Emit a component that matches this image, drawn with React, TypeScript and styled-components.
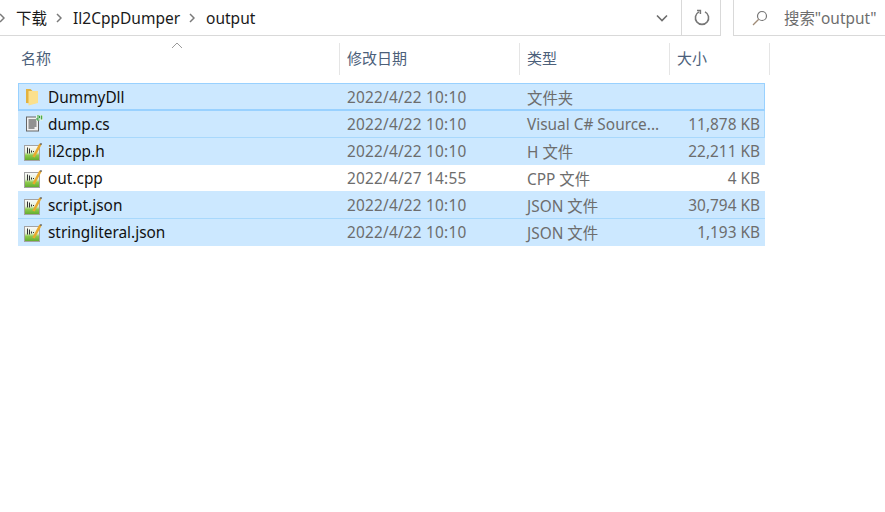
import React from 'react';
import styled, { createGlobalStyle } from 'styled-components';

const GlobalStyle = createGlobalStyle`
  html, body {
    margin: 0;
    background: #fff;
    font-family: "Noto Sans", "Noto Sans CJK SC", sans-serif;
  }
`;

const Window = styled.div`
  width: 885px;
  height: 512px;
  overflow: hidden;
  background: #fff;
`;

const TopBar = styled.div`
  display: flex;
  height: 36px;
`;

const AddressBar = styled.div`
  width: 721px;
  flex: none;
  box-sizing: border-box;
  display: flex;
  align-items: center;
  border-bottom: 1px solid #d9d9d9;
  border-right: 1px solid #d9d9d9;
  color: #1a1a1a;
  font-size: 15.5px;
`;

const Crumb = styled.span`
  white-space: nowrap;
  line-height: 34px;
`;

const CrumbArrow = styled.svg`
  flex: none;
  width: 6px;
  height: 10px;
  margin: 0 11px 0 9px;
`;

const RootArrow = styled(CrumbArrow)`
  margin-left: -1px;
`;

const Spacer = styled.div`
  flex: 1;
`;

const HistoryButton = styled.div`
  width: 39px;
  height: 35px;
  display: flex;
  align-items: center;
  justify-content: center;
  box-sizing: border-box;
  border-right: 1px solid #d9d9d9;
`;

const RefreshButton = styled.div`
  width: 38px;
  height: 35px;
  display: flex;
  align-items: center;
  justify-content: center;
  padding-left: 2px;
  box-sizing: border-box;
`;

const SearchBox = styled.div`
  margin-left: 12px;
  flex: 1;
  box-sizing: border-box;
  display: flex;
  align-items: center;
  gap: 16px;
  padding-left: 18px;
  border-left: 1px solid #d9d9d9;
  border-bottom: 1px solid #d9d9d9;
  color: #6d6d6d;
  font-size: 15.4px;
  white-space: nowrap;
`;

const HeaderRow = styled.div`
  display: grid;
  grid-template-columns: 340px 180px 150px 100px;
  height: 32px;
  margin-top: 7px;
  position: relative;
`;

const HeaderCell = styled.div`
  box-sizing: border-box;
  border-right: 1px solid #e5e5e5;
  padding-left: ${(p) => (p.$first ? 21 : 7)}px;
  color: #4c607a;
  font-size: 15px;
  line-height: 31px;
`;

const SortCaret = styled.svg`
  position: absolute;
  left: 171px;
  top: -1px;
  width: 12px;
  height: 7px;
`;

const List = styled.div`
  margin: 8px 0 0 18px;
  width: 747px;
`;

const Row = styled.div`
  display: grid;
  grid-template-columns: 321px 180px 150px 96px;
  box-sizing: border-box;
  height: ${(p) => (p.$focused ? 28 : 27)}px;
  padding-top: ${(p) => (p.$focused ? 1 : 0)}px;
  align-items: center;
  white-space: nowrap;
  background: ${(p) => (p.$selected ? '#cce8ff' : '#fff')};
  border-bottom: 1px solid ${(p) => p.$line};
  ${(p) => p.$focused && 'box-shadow: inset 0 0 0 1px #99d1ff;'}
  ${(p) => p.$edge && 'box-shadow: inset -1px 0 0 #a8d8fc;'}
`;

const NameCell = styled.div`
  display: flex;
  align-items: center;
  gap: 5px;
  padding-left: 6px;
  color: #111;
  font-size: 15.4px;
`;

const DetailCell = styled.div`
  padding-left: 8px;
  color: #6d6d6d;
  font-size: 15.4px;
  letter-spacing: ${(p) => (p.$date ? '0.2px' : '0')};
`;

const SizeCell = styled.div`
  text-align: right;
  padding-right: 5px;
  color: #6d6d6d;
  font-size: 15.4px;
  margin-left: -10px;
`;

const Arrow = () => (
  <CrumbArrow viewBox="0 0 6 10">
    <path d="M1 1l4 4-4 4" fill="none" stroke="#7a7a7a" strokeWidth="1.5" />
  </CrumbArrow>
);

const FolderIcon = () => (
  <svg width="19" height="19" viewBox="0 0 19 19">
    <path d="M2 1h4.5l2 2v12.5l-6.500-.5z" fill="#e3b23f" />
    <path d="M4.500 3h9.500v12l-9.500 2.500z" fill="#fbe08c" />
  </svg>
);

const SourceIcon = () => (
  <svg width="19" height="19" viewBox="0 1.500 19 19">
    <rect x="2.500" y="3.500" width="12" height="14" fill="#f2f2f2" stroke="#666" />
    <path d="M4.500 6.500h8M4.500 8.500h8M4.500 10.500h8M4.500 12.500h8M4.500 14.500h6" stroke="#333" />
    <rect x="12" y="1.500" width="7" height="5.500" fill="#e8f5e8" />
    <path d="M13 2.500h2.500v2H13v2h2.500" fill="none" stroke="#2f9a3a" />
    <path d="M17.500 2v4" stroke="#4aa84a" strokeWidth="1.500" />
  </svg>
);

const ScriptIcon = () => (
  <svg width="19" height="20" viewBox="0 0 19 20">
    <defs>
      <linearGradient id="sheet" x1="0" y1="0" x2="0" y2="1">
        <stop offset="0" stopColor="#fafafa" />
        <stop offset="0.45" stopColor="#e6f0d8" />
        <stop offset="0.65" stopColor="#8fcb4e" />
        <stop offset="1" stopColor="#5faa2c" />
      </linearGradient>
    </defs>
    <rect x="0.500" y="4.500" width="15" height="15" fill="url(#sheet)" stroke="#a3a3a3" />
    <path d="M3.500 6.500v6M5.500 7.500v5M7.500 9.500v2M9.500 10v1" stroke="#333" />
    <path d="M9.500 16L16.500 3" stroke="#e8a92e" strokeWidth="2.600" />
    <path d="M16.300 2.600l1.400.8" stroke="#555" strokeWidth="1.600" />
  </svg>
);

const SELECT_LINE = '#a8d8fc';
const FILL = '#cce8ff';

const files = [
  { name: 'DummyDll', date: '2022/4/22 10:10', kind: '文件夹', size: '', icon: <FolderIcon />, selected: true, focused: true, line: '#99d1ff' },
  { name: 'dump.cs', date: '2022/4/22 10:10', kind: 'Visual C# Source...', size: '11,878 KB', icon: <SourceIcon />, selected: true, edge: true, line: SELECT_LINE },
  { name: 'il2cpp.h', date: '2022/4/22 10:10', kind: 'H 文件', size: '22,211 KB', icon: <ScriptIcon />, selected: true, line: FILL },
  { name: 'out.cpp', date: '2022/4/27 14:55', kind: 'CPP 文件', size: '4 KB', icon: <ScriptIcon />, selected: false, line: FILL },
  { name: 'script.json', date: '2022/4/22 10:10', kind: 'JSON 文件', size: '30,794 KB', icon: <ScriptIcon />, selected: true, line: SELECT_LINE },
  { name: 'stringliteral.json', date: '2022/4/22 10:10', kind: 'JSON 文件', size: '1,193 KB', icon: <ScriptIcon />, selected: true, line: FILL },
];

export default function App() {
  return (
    <Window>
      <GlobalStyle />
      <TopBar>
        <AddressBar>
          <RootArrow viewBox="0 0 6 10">
            <path d="M1 1l4 4-4 4" fill="none" stroke="#7a7a7a" strokeWidth="1.5" />
          </RootArrow>
          <Crumb>下载</Crumb>
          <Arrow />
          <Crumb>Il2CppDumper</Crumb>
          <Arrow />
          <Crumb>output</Crumb>
          <Spacer />
          <HistoryButton>
            <svg width="12" height="8" viewBox="0 0 12 8">
              <path d="M1 1.5l5 5 5-5" fill="none" stroke="#6d6d6d" strokeWidth="1.6" />
            </svg>
          </HistoryButton>
          <RefreshButton>
            <svg width="16" height="17" viewBox="0 0 16 17">
              <path d="M5 2.9A6.6 6.6 0 1 0 11 2.9" fill="none" stroke="#777" strokeWidth="1.6" />
              <path d="M3 1.5h3.4v3.6" fill="none" stroke="#777" strokeWidth="1.5" />
            </svg>
          </RefreshButton>
        </AddressBar>
        <SearchBox>
          <svg width="16" height="16" viewBox="0 0 16 16">
            <circle cx="10" cy="6" r="4.5" fill="none" stroke="#777" strokeWidth="1.2" />
            <path d="M6.7 9.3L1 15" stroke="#a08c78" strokeWidth="1.3" />
          </svg>
          <span>搜索"output"</span>
        </SearchBox>
      </TopBar>

      <HeaderRow>
        <SortCaret viewBox="0 0 12 7">
          <path d="M1 6l5-5 5 5" fill="none" stroke="#9a9a9a" />
        </SortCaret>
        <HeaderCell $first>名称</HeaderCell>
        <HeaderCell>修改日期</HeaderCell>
        <HeaderCell>类型</HeaderCell>
        <HeaderCell>大小</HeaderCell>
      </HeaderRow>

      <List>
        {files.map((f) => (
          <Row key={f.name} $selected={f.selected} $focused={f.focused} $edge={f.edge} $line={f.line}>
            <NameCell>
              {f.icon}
              {f.name}
            </NameCell>
            <DetailCell $date>{f.date}</DetailCell>
            <DetailCell>{f.kind}</DetailCell>
            <SizeCell>{f.size}</SizeCell>
          </Row>
        ))}
      </List>
    </Window>
  );
}
